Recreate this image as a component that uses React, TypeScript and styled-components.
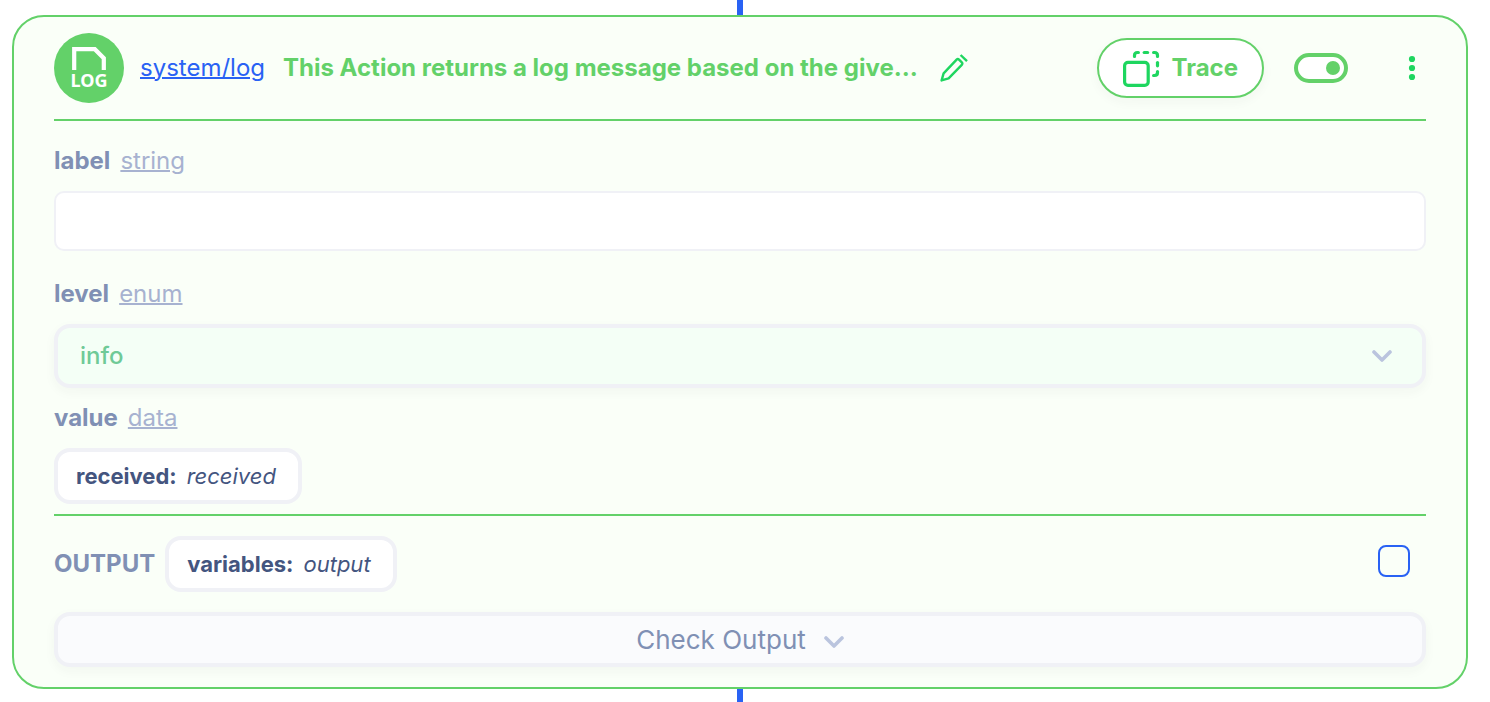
import React from "react";
import styled, { createGlobalStyle } from "styled-components";

const GREEN = "#63d169";
const BRIGHT = "#1ed65f";
const BLUE = "#2962f4";
const MUTED = "#8090b4";
const SOFT = "#a7b2d0";
const INK = "#44557f";
const EDGE = "#f0f1f6";

const GlobalStyle = createGlobalStyle`
  *, *::before, *::after { box-sizing: border-box; }
  body {
    margin: 0;
    background: #ffffff;
    font-family: Inter, "Liberation Sans", sans-serif;
    font-size: 24px;
    line-height: 32px;
  }
  button, input, select { font: inherit; margin: 0; }
  button, select { cursor: pointer; }
`;

const Flow = styled.main`
  display: flex;
  flex-direction: column;
  padding: 0 22px 0 12px;
`;

const Connector = styled.div<{ $length: number }>`
  align-self: center;
  width: 6px;
  height: ${(p) => p.$length}px;
  background: ${BLUE};
`;

const Card = styled.section`
  border: 2px solid ${GREEN};
  border-radius: 32px;
  padding: 16px 40px 20px;
  background: #fafff8;
`;

const Header = styled.header`
  display: flex;
  align-items: center;
  gap: 16px;
  padding-bottom: 16px;
  border-bottom: 2px solid ${GREEN};
`;

const Heading = styled.div`
  display: flex;
  align-items: center;
  gap: 18px;
  min-width: 0;
`;

const Badge = styled.svg`
  flex: none;
  width: 70px;
  height: 70px;
`;

const ActionLink = styled.a`
  color: ${BLUE};
  text-decoration-thickness: 2px;
`;

const Title = styled.h2`
  margin: 0;
  min-width: 0;
  overflow: hidden;
  white-space: nowrap;
  text-overflow: ellipsis;
  font-size: 24px;
  font-weight: 700;
  color: ${GREEN};
`;

const IconButton = styled.button`
  display: flex;
  align-items: center;
  justify-content: center;
  flex: none;
  width: 28px;
  height: 40px;
  padding: 0;
  border: 0;
  background: none;
  color: ${BRIGHT};
`;

const EditButton = styled(IconButton)`
  margin-left: 6px;
`;

const Controls = styled.div`
  display: flex;
  align-items: center;
  gap: 30px;
  margin-left: auto;
`;

const TraceButton = styled.button`
  display: flex;
  align-items: center;
  gap: 12px;
  height: 60px;
  padding: 0 24px;
  border: 2px solid ${GREEN};
  border-radius: 30px;
  background: #ffffff;
  box-shadow: 0 4px 12px rgba(40, 60, 40, 0.04);
  color: ${GREEN};
  font-weight: 700;

  > svg { color: ${BRIGHT}; }
`;

const Toggle = styled.input`
  appearance: none;
  display: flex;
  align-items: center;
  width: 54px;
  height: 30px;
  padding: 0 4px;
  border: 4px solid ${GREEN};
  border-radius: 15px;
  background: #ffffff;
  cursor: pointer;

  &::before {
    content: "";
    width: 14px;
    height: 14px;
    border-radius: 50%;
    background: ${GREEN};
  }
  &:checked { justify-content: flex-end; }
`;

const MenuButton = styled(IconButton)`
  margin-left: 20px;
`;

const Fields = styled.div`
  display: flex;
  flex-direction: column;
  gap: 14px;
  padding: 24px 0 10px;
  border-bottom: 2px solid ${GREEN};
`;

const Field = styled.div<{ $after?: number }>`
  display: flex;
  flex-direction: column;
  align-items: flex-start;
  gap: 14px;
  margin-bottom: ${(p) => p.$after ?? 0}px;
`;

const FieldHead = styled.div`
  display: flex;
  gap: 10px;
`;

const FieldName = styled.label`
  font-weight: 700;
  color: ${MUTED};
`;

const TypeLink = styled.a`
  color: ${SOFT};
  text-decoration-thickness: 2px;
`;

const TextInput = styled.input`
  width: 100%;
  height: 60px;
  padding: 0 20px;
  border: 2px solid ${EDGE};
  border-radius: 10px;
  background: #ffffff;
  color: ${INK};
`;

const SelectBox = styled.div`
  display: grid;
  align-items: center;
  width: 100%;

  > * { grid-area: 1 / 1; }
  > svg {
    justify-self: end;
    margin-right: 34px;
    pointer-events: none;
  }
`;

const Select = styled.select`
  appearance: none;
  width: 100%;
  height: 64px;
  padding: 0 22px;
  border: 4px solid ${EDGE};
  border-radius: 16px;
  background: #f4fff6;
  box-shadow: 0 4px 12px rgba(40, 60, 40, 0.04);
  color: #6fca97;
  font-weight: 500;
`;

const Chip = styled.button`
  display: flex;
  align-items: center;
  gap: 10px;
  height: 56px;
  padding: 0 22px 0 18px;
  border: 4px solid ${EDGE};
  border-radius: 16px;
  background: #ffffff;
  color: ${INK};
  font-size: 22px;
`;

const NameTag = styled.strong`
  font-weight: 700;
`;

const ValueTag = styled.em`
  font-weight: 400;
`;

const OutputRow = styled.div`
  display: flex;
  align-items: center;
  gap: 10px;
  padding: 20px 0;
`;

const OutputTitle = styled.h3`
  margin: 0;
  font-size: 24px;
  font-weight: 700;
  color: ${MUTED};
`;

const Tick = styled.input`
  appearance: none;
  width: 32px;
  height: 32px;
  margin: 0 16px 6px auto;
  border: 2px solid ${BLUE};
  border-radius: 8px;
  cursor: pointer;

  &:checked { background: ${BLUE}; }
`;

const CheckButton = styled.button`
  display: flex;
  align-items: center;
  justify-content: center;
  gap: 18px;
  width: 100%;
  height: 55px;
  padding: 0;
  border: 4px solid ${EDGE};
  border-radius: 16px;
  background: #fafbfd;
  box-shadow: 0 4px 12px rgba(40, 60, 40, 0.04);
  color: ${MUTED};
  font-size: 26px;

  > svg { margin-top: 4px; }
`;

const LogBadge = () => (
  <Badge viewBox="0 0 70 70" role="img" aria-label="Log">
    <circle cx="35" cy="35" r="35" fill={GREEN} />
    <path d="M20.2 37V16.2H40.8L49.8 25.2V37" fill="none" stroke="#fff" strokeWidth="4.2" />
    <text
      x="35"
      y="54"
      textAnchor="middle"
      fill="#fff"
      fontFamily="'Noto Sans', sans-serif"
      fontSize="18"
      fontWeight="700"
    >
      LOG
    </text>
  </Badge>
);

const Pencil = () => (
  <svg width="28" height="28" viewBox="0 0 28 28" fill="none" stroke="currentColor" strokeWidth="2.4" aria-hidden="true">
    <path
      d="M1.6 26.4L3.6 19.4L16.6 5.6Q17.8 4.4 19 5.6L21.8 8.4Q23 9.6 21.8 10.8L8.6 24.4Z"
      strokeLinejoin="round"
    />
    <path d="M20.6 1L27 7.2" />
  </svg>
);

const Layers = () => (
  <svg width="37" height="38" viewBox="0 0 37 38" fill="none" stroke="currentColor" strokeWidth="3.2" aria-hidden="true">
    <rect x="1.6" y="13.4" width="23.6" height="23" rx="3.4" />
    <g strokeLinecap="round">
      <path d="M11.5 7.4V6.5Q11.5 3.5 14.5 3.5H15.4" />
      <path d="M21.2 3.5H24.6" />
      <path d="M30.6 3.5H31.5Q34.5 3.5 34.5 6.5V7.4" />
      <path d="M34.5 13.6V16.8" />
      <path d="M34.5 22.6V23.5Q34.5 26.5 31.5 26.5H30.6" />
    </g>
  </svg>
);

const Dots = () => (
  <svg width="8" height="26" viewBox="0 0 8 26" fill="currentColor" aria-hidden="true">
    <circle cx="4" cy="4" r="3.1" />
    <circle cx="4" cy="13" r="3.1" />
    <circle cx="4" cy="22" r="3.1" />
  </svg>
);

const Chevron = () => (
  <svg width="20" height="12" viewBox="0 0 20 12" fill="none" aria-hidden="true">
    <path
      d="M2 2L10 10L18 2"
      stroke="#bac4de"
      strokeWidth="3.6"
      strokeLinecap="round"
      strokeLinejoin="round"
    />
  </svg>
);

export default function App() {
  return (
    <>
      <GlobalStyle />
      <Flow>
        <Connector $length={15} />
        <Card>
          <Header>
            <LogBadge />
            <Heading>
              <ActionLink href="#system-log">system/log</ActionLink>
              <Title>This Action returns a log message based on the give…</Title>
            </Heading>
            <EditButton type="button" aria-label="Edit description">
              <Pencil />
            </EditButton>
            <Controls>
              <TraceButton type="button">
                <Layers />
                Trace
              </TraceButton>
              <Toggle type="checkbox" role="switch" aria-label="Enabled" defaultChecked />
              <MenuButton type="button" aria-label="More options">
                <Dots />
              </MenuButton>
            </Controls>
          </Header>

          <Fields>
            <Field $after={13}>
              <FieldHead>
                <FieldName htmlFor="log-label">label</FieldName>
                <TypeLink href="#string">string</TypeLink>
              </FieldHead>
              <TextInput id="log-label" type="text" />
            </Field>
            <Field>
              <FieldHead>
                <FieldName htmlFor="log-level">level</FieldName>
                <TypeLink href="#enum">enum</TypeLink>
              </FieldHead>
              <SelectBox>
                <Select id="log-level" defaultValue="info">
                  <option value="info">info</option>
                </Select>
                <Chevron />
              </SelectBox>
            </Field>
            <Field>
              <FieldHead>
                <FieldName htmlFor="log-value">value</FieldName>
                <TypeLink href="#data">data</TypeLink>
              </FieldHead>
              <Chip id="log-value" type="button">
                <NameTag>received:</NameTag>
                <ValueTag>received</ValueTag>
              </Chip>
            </Field>
          </Fields>

          <OutputRow>
            <OutputTitle>OUTPUT</OutputTitle>
            <Chip type="button">
              <NameTag>variables:</NameTag>
              <ValueTag>output</ValueTag>
            </Chip>
            <Tick type="checkbox" aria-label="Select output" />
          </OutputRow>

          <CheckButton type="button">
            Check Output
            <Chevron />
          </CheckButton>
        </Card>
        <Connector $length={13} />
      </Flow>
    </>
  );
}
